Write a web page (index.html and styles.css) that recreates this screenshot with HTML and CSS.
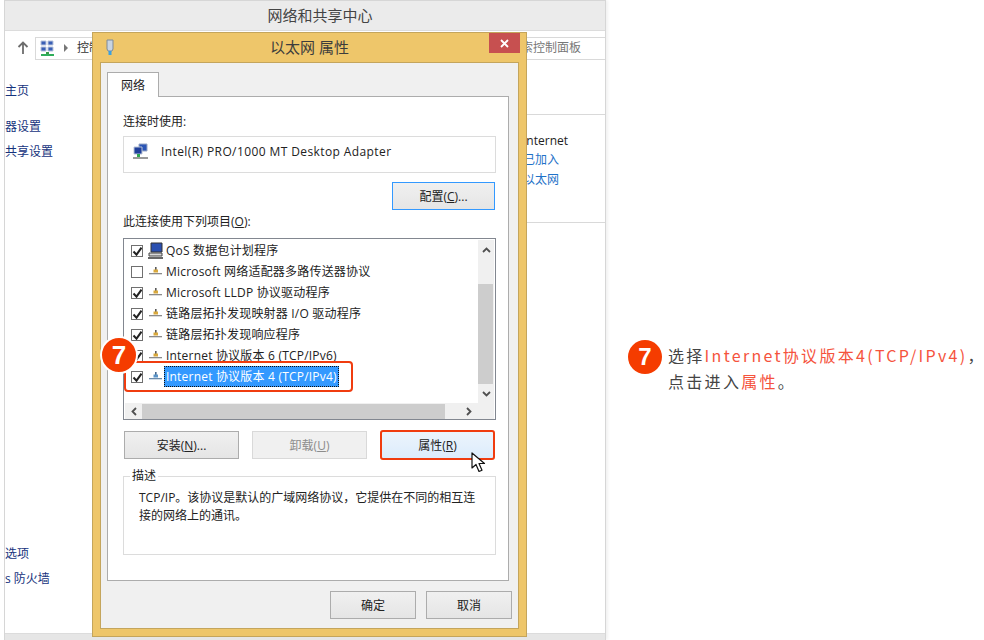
FILE: index.html
```html
<!DOCTYPE html>
<html lang="zh-CN">
<head>
    <meta charset="UTF-8">
    <meta name="viewport" content="width=device-width, initial-scale=1.0">
    <title>以太网 属性</title>
    <link rel="stylesheet" href="styles.css">
</head>
<body>

<svg class="sprites" width="0" height="0">
    <symbol id="net" viewBox="0 0 13 9">
        <path d="M6 0h1.600v4H6z" fill="#5a5a5a"/>
        <path d="M4.500 2.500h4.500v3h-4.500z" fill="#d8a83c"/>
        <path d="M0 6h13v1.300H0z" fill="#8a8a8a"/>
    </symbol>
    <symbol id="net-picked" viewBox="0 0 13 9">
        <path d="M6 0h1.600v4H6z" fill="#44668c"/>
        <path d="M4.500 2.500h4.500v3h-4.500z" fill="#5a94c8"/>
        <path d="M0 6h13v1.300H0z" fill="#6c8cac"/>
    </symbol>
    <symbol id="check" viewBox="0 0 13 13">
        <path d="M2.500 6.500l3 3.200 5-7" fill="none" stroke="#222" stroke-width="2"/>
    </symbol>
</svg>

<div class="page">
    <div class="window">
        <div class="window-title">网络和共享中心</div>
        <div class="address">
            <svg class="up" width="12" height="14" viewBox="0 0 12 14">
                <path d="M6 1v12M1.500 6L6 1.500 10.500 6" fill="none" stroke="#6d6d6d" stroke-width="1.800"/>
            </svg>
            <div class="address-box">
                <svg width="15" height="16" viewBox="0 0 15 16">
                    <path d="M1 1h5v4H1zM8 1h5v4H8zM1 7h5v4H1zM8 7h5v4H8z" fill="#3a5fb5" stroke="#b7c4dc"/>
                    <path d="M6 12h3v2H6z" fill="#3a9a4a"/>
                    <path d="M1 14h13v2H1z" fill="#2fae5a"/>
                </svg>
                <span class="crumb-arrow"></span>
                <span>控制</span>
                <span class="search">搜索控制面板</span>
            </div>
        </div>
        <div class="window-body">
            <div class="sidebar">
                <div class="side-top">
                    <a class="first">主页</a>
                    <a class="second">器设置</a>
                    <a>共享设置</a>
                </div>
                <div class="side-bottom">
                    <a>选项</a>
                    <a>s 防火墙</a>
                </div>
            </div>
            <div class="content">
                <div class="content-row">
                    <p>Internet</p>
                    <a>已加入</a>
                    <a>以太网</a>
                </div>
            </div>
        </div>
        <div class="statusbar"></div>
    </div>

    <div class="note">
        <span class="badge">7</span>
        <p>选择<em>Internet协议版本4(TCP/IPv4)</em><span class="comma">，</span><br>点击进入<em>属性</em>。</p>
    </div>
</div>

<div class="dialog">
    <div class="dialog-title">
        <svg class="plug" width="10" height="16" viewBox="0 0 10 16">
            <path d="M2 1h6v9l-1 2H3l-1-2z" fill="#c8d4e2" stroke="#7c8a9a"/>
            <path d="M3.500 12h3v4h-3z" fill="#3aa0e0"/>
        </svg>
        <span>以太网 属性</span>
        <span class="close">
            <svg width="9" height="9" viewBox="0 0 9 9"><path d="M1 1l7 7M8 1L1 8" stroke="#fff" stroke-width="1.800"/></svg>
        </span>
    </div>
    <div class="dialog-body">
        <div class="tab">网络</div>
        <div class="panel">
            <div class="label">连接时使用:</div>
            <div class="adapter">
                <svg width="16" height="16" viewBox="0 0 16 16">
                    <path d="M6 1h8v7H6z" fill="#2b55b5" stroke="#9aa8c4"/>
                    <path d="M1 4h8v7H1z" fill="#1f3f9a" stroke="#b9c4d8"/>
                    <path d="M4 11h3v3H4z" fill="#2fa84f"/>
                    <path d="M0 14h15v2H0z" fill="#9a9a9a"/>
                </svg>
                <span>Intel(R) PRO/1000 MT Desktop Adapter</span>
            </div>
            <div class="config-row">
                <button class="btn btn-config">配置(<u>C</u>)...</button>
            </div>
            <div class="label label-list">此连接使用下列项目(<u>O</u>):</div>

            <div class="list">
                <div class="rows">
                    <div class="row">
                        <span class="box"><svg width="13" height="13"><use href="#check"/></svg></span>
                        <svg class="qos" width="16" height="17" viewBox="0 0 16 17">
                            <path d="M3 1h11v9H3z" fill="#2a4fb0" stroke="#333"/>
                            <path d="M1 11h13v3H1z" fill="#d8d8d8" stroke="#444"/>
                            <path d="M0 15h15v2H0z" fill="#666"/>
                        </svg>
                        <span class="row-text">QoS 数据包计划程序</span>
                    </div>
                    <div class="row">
                        <span class="box"></span>
                        <svg class="glyph" width="13" height="9"><use href="#net"/></svg>
                        <span class="row-text">Microsoft 网络适配器多路传送器协议</span>
                    </div>
                    <div class="row">
                        <span class="box"><svg width="13" height="13"><use href="#check"/></svg></span>
                        <svg class="glyph" width="13" height="9"><use href="#net"/></svg>
                        <span class="row-text">Microsoft LLDP 协议驱动程序</span>
                    </div>
                    <div class="row">
                        <span class="box"><svg width="13" height="13"><use href="#check"/></svg></span>
                        <svg class="glyph" width="13" height="9"><use href="#net"/></svg>
                        <span class="row-text">链路层拓扑发现映射器 I/O 驱动程序</span>
                    </div>
                    <div class="row">
                        <span class="box"><svg width="13" height="13"><use href="#check"/></svg></span>
                        <svg class="glyph" width="13" height="9"><use href="#net"/></svg>
                        <span class="row-text">链路层拓扑发现响应程序</span>
                    </div>
                    <div class="row">
                        <span class="box"><svg width="13" height="13"><use href="#check"/></svg></span>
                        <svg class="glyph" width="13" height="9"><use href="#net"/></svg>
                        <span class="row-text">Internet 协议版本 6 (TCP/IPv6)</span>
                    </div>
                    <div class="row row-picked">
                        <span class="box"><svg width="13" height="13"><use href="#check"/></svg></span>
                        <svg class="glyph" width="13" height="9"><use href="#net-picked"/></svg>
                        <span class="row-text selected">Internet 协议版本 4 (TCP/IPv4)</span>
                        <span class="ring"></span>
                    </div>
                </div>
                <div class="vscroll">
                    <svg width="9" height="6" viewBox="0 0 9 6"><path d="M1 5l3.500-3.500L8 5" fill="none" stroke="#505050" stroke-width="1.800"/></svg>
                    <span class="vthumb"></span>
                    <svg width="9" height="6" viewBox="0 0 9 6"><path d="M1 1l3.500 3.500L8 1" fill="none" stroke="#505050" stroke-width="1.800"/></svg>
                </div>
                <div class="hscroll">
                    <svg width="6" height="9" viewBox="0 0 6 9"><path d="M5 1L1.500 4.500 5 8" fill="none" stroke="#505050" stroke-width="1.800"/></svg>
                    <span class="hthumb"></span>
                    <svg width="6" height="9" viewBox="0 0 6 9"><path d="M1 1l3.500 3.500L1 8" fill="none" stroke="#505050" stroke-width="1.800"/></svg>
                </div>
            </div>

            <div class="actions">
                <button class="btn btn-wide">安装(<u>N</u>)...</button>
                <button class="btn btn-wide btn-off">卸载(<u>U</u>)</button>
                <button class="btn btn-wide btn-picked">属性(<u>R</u>)</button>
            </div>

            <fieldset class="desc">
                <legend>描述</legend>
                <p>TCP/IP。该协议是默认的广域网络协议，它提供在不同的相互连接的网络上的通讯。</p>
            </fieldset>
        </div>
        <div class="dialog-foot">
            <button class="btn btn-foot">确定</button>
            <button class="btn btn-foot">取消</button>
        </div>
    </div>
</div>

<span class="badge badge-list">7</span>
<svg class="cursor" width="15" height="21" viewBox="0 0 15 21">
    <path d="M1 1v15l4-3.500 3 7 3-1.300-3-6.700h5.500z" fill="#fff" stroke="#111" stroke-width="1.200" stroke-linejoin="round"/>
</svg>

</body>
</html>
```

FILE: styles.css
```css
* {
    box-sizing: border-box;
}

body {
    margin: 0;
    height: 640px;
    overflow: hidden;
    background: #fff;
    color: #222;
    font-family: "Open Sans", "Noto Sans CJK SC", sans-serif;
    font-size: 12px;
    line-height: 16px;
}

p {
    margin: 0;
}

.sprites {
    position: absolute;
}

.page {
    display: flex;
    height: 640px;
}

/* window behind the dialog */
.window {
    flex: none;
    display: flex;
    flex-direction: column;
    width: 602px;
    height: 640px;
    margin-left: 4px;
    border: 1px solid #d6d6d6;
    border-bottom: none;
    box-shadow: 2px 0 3px rgba(0, 0, 0, 0.06);
    overflow: hidden;
}

.window-title {
    height: 30px;
    padding: 5px 0 0 30px;
    background: #ebebeb;
    border-bottom: 1px solid #dcdcdc;
    color: #444;
    font-size: 15px;
    line-height: 18px;
    text-align: center;
}

.address {
    display: flex;
    align-items: center;
    height: 22px;
    margin-top: 6px;
}

.up {
    margin-left: 12px;
    margin-right: 6px;
}

.address-box {
    flex: 1;
    display: flex;
    align-items: center;
    height: 23px;
    padding-left: 4px;
    border: 1px solid #d9d9d9;
    border-right: none;
    color: #333;
}

.crumb-arrow {
    width: 0;
    height: 0;
    margin: 0 9px 0 9px;
    border-left: 4px solid #777;
    border-top: 4px solid transparent;
    border-bottom: 4px solid transparent;
}

.search {
    margin-left: auto;
    margin-right: 24px;
    color: #777;
}

.window-body {
    flex: 1;
    display: flex;
    min-height: 0;
}

.sidebar {
    display: flex;
    flex-direction: column;
    justify-content: space-between;
    width: 90px;
    color: #16337d;
}

.sidebar a {
    display: block;
}

.side-top {
    padding-top: 24px;
}

.side-top a {
    margin-bottom: 9px;
}

.side-top .first {
    margin-bottom: 20px;
}

.side-bottom {
    padding-bottom: 46px;
}

.side-bottom a {
    margin-top: 9px;
}

.content {
    flex: 1;
    margin-top: 55px;
    border-top: 1px solid #d9d9d9;
}

.content-row {
    height: 108px;
    padding: 18px 0 0 428px;
    border-bottom: 1px solid #d9d9d9;
}

.content-row p {
    margin-bottom: 3px;
    color: #222;
}

.content-row a {
    display: block;
    margin-bottom: 4px;
    color: #1f72c8;
}

.statusbar {
    height: 7px;
    background: #e6e6e6;
    border-top: 1px solid #dcdcdc;
}

/* annotation on the right */
.note {
    display: flex;
    gap: 6px;
    margin: 342px 0 0 22px;
    color: #444;
    font-family: "Noto Sans CJK SC", sans-serif;
    font-size: 16px;
    line-height: 26px;
    letter-spacing: 2.3px;
    white-space: nowrap;
}

.note em {
    color: #f5533d;
    font-style: normal;
}

.comma {
    letter-spacing: 0;
}

.badge {
    flex: none;
    width: 34px;
    height: 34px;
    margin-top: -2px;
    border-radius: 50%;
    background: #f53c00;
    color: #fff;
    font-family: "Liberation Sans", sans-serif;
    font-size: 24px;
    font-weight: bold;
    line-height: 34px;
    letter-spacing: 0;
    text-align: center;
}

.badge-list {
    position: absolute;
    left: 100px;
    top: 336px;
    width: 38px;
    height: 38px;
    margin-top: 0;
    border: 2px solid #fff;
    font-size: 26px;
}

/* dialog */
.dialog {
    position: absolute;
    left: 92px;
    top: 32px;
    width: 435px;
    height: 605px;
    border: 1px solid #c4a55c;
    background: #eec66a;
}

.dialog-title {
    position: relative;
    height: 29px;
    padding-top: 5px;
    color: #3c3c3c;
    font-size: 15px;
    line-height: 18px;
    text-align: center;
}

.plug {
    position: absolute;
    left: 12px;
    top: 6px;
}

.close {
    position: absolute;
    right: 6px;
    top: 0;
    display: flex;
    align-items: center;
    justify-content: center;
    width: 31px;
    height: 20px;
    background: #c75050;
}

.dialog-body {
    height: 567px;
    margin: 0 7px;
    padding: 9px 9px 0 6px;
    background: #f0f0f0;
    border: 1px solid #c4a55c;
}

.tab {
    position: relative;
    z-index: 1;
    width: 52px;
    height: 25px;
    padding-top: 5px;
    margin-bottom: -1px;
    background: #fff;
    border: 1px solid #acacac;
    border-bottom: none;
    text-align: center;
}

.panel {
    height: 485px;
    padding: 16px 12px 0 15px;
    background: #fff;
    border: 1px solid #acacac;
}

.label {
    height: 16px;
    padding-top: 1px;
}

.adapter {
    display: flex;
    align-items: center;
    gap: 12px;
    height: 37px;
    margin-top: 7px;
    padding: 0 0 5px 9px;
    border: 1px solid #dcdcdc;
    letter-spacing: 0.4px;
}

.adapter svg {
    margin-bottom: 2px;
}

.config-row {
    display: flex;
    justify-content: flex-end;
    margin-top: 9px;
    padding-right: 1px;
}

.btn {
    height: 28px;
    padding: 0;
    border: 1px solid #acacac;
    background: linear-gradient(#f0f0f0, #e5e5e5);
    color: #222;
    font-family: inherit;
    font-size: 12px;
}

.btn-config {
    width: 103px;
    border-color: #3399ff;
}

.label-list {
    margin-top: 3px;
}

.list {
    display: grid;
    grid-template-columns: 1fr 16px;
    grid-template-rows: 1fr 16px;
    height: 182px;
    margin-top: 9px;
    padding: 1px 1px 0 1px;
    border: 1px solid #828790;
}

.row {
    position: relative;
    display: flex;
    align-items: center;
    height: 21px;
}

.box {
    flex: none;
    width: 12px;
    height: 12px;
    margin-left: 6px;
    border: 1px solid #707070;
    background: #fff;
    overflow: hidden;
}

.box svg {
    display: block;
    margin: -1px;
}

.glyph {
    flex: none;
    margin: 0 4px 0 6px;
}

.qos {
    flex: none;
    margin: 0 2px 0 5px;
}

.row-text {
    letter-spacing: 0.2px;
    white-space: nowrap;
}

.selected {
    height: 21px;
    margin-left: -2px;
    padding: 3px 2px 0;
    background: #3399ff;
    color: #fff;
    outline: 1px dotted #111;
    outline-offset: -1px;
}

.ring {
    position: absolute;
    left: -1px;
    top: -5px;
    width: 229px;
    height: 31px;
    border: 2px solid #f03c0f;
    border-radius: 4px;
}

.vscroll {
    display: flex;
    flex-direction: column;
    align-items: center;
    justify-content: space-between;
    padding: 7px 0 6px;
    background: #f0f0f0;
}

.vthumb {
    display: block;
    align-self: stretch;
    height: 100px;
    margin: 26px 1px 0 0;
    margin-bottom: 2px;
    background: #cdcdcd;
}

.hscroll {
    grid-column: 1 / 3;
    display: flex;
    align-items: center;
    padding: 0 22px 0 6px;
    background: #f0f0f0;
}

.hthumb {
    display: block;
    width: 303px;
    height: 15px;
    margin: 0 21px 0 5px;
    background: #cdcdcd;
}

.actions {
    display: flex;
    gap: 13px;
    margin-top: 11px;
    padding-left: 1px;
}

.btn-wide {
    width: 115px;
}

.btn-off {
    border-color: #d9d9d9;
    background: #f0f0f0;
    color: #8c8c8c;
}

.btn-picked {
    height: 30px;
    margin-top: -1px;
    background: linear-gradient(#ecf4fc, #dcecfc);
    border: 2px solid #f03c0f;
    border-radius: 3px;
}

.desc {
    height: 87px;
    margin: 8px 0 0;
    padding: 5px 15px 0;
    border: 1px solid #dcdcdc;
}

.desc legend {
    margin-left: -9px;
    padding: 0 2px;
    line-height: 16px;
}

.desc p {
    line-height: 18px;
}

.dialog-foot {
    display: flex;
    justify-content: flex-end;
    gap: 10px;
    margin-top: 10px;
    margin-right: -3px;
}

.btn-foot {
    width: 86px;
}

.cursor {
    position: absolute;
    left: 471px;
    top: 452px;
}
```
